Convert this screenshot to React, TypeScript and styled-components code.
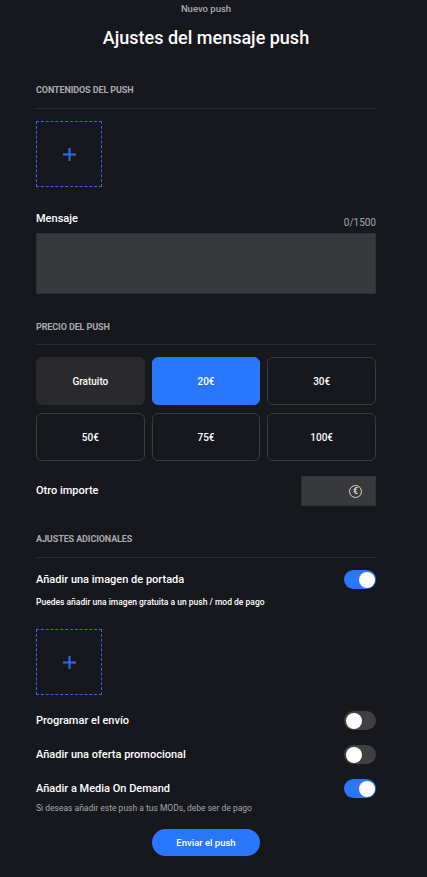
import React from "react";
import styled, { createGlobalStyle } from "styled-components";

const Global = createGlobalStyle`
  html, body { margin: 0; padding: 0; background: #17181d; }
  body { font-family: Roboto, "Noto Sans", Inter, sans-serif; color: #fff; }
  * { box-sizing: border-box; }
`;

const Page = styled.div`
  width: 427px;
  min-height: 877px;
  background: #17181d;
  padding: 0 51px 0 36px;
  display: flex;
  flex-direction: column;
`;

const TopLabel = styled.div`
  margin-top: 3px;
  font-size: 9.5px;
  line-height: 12px;
  font-weight: 500;
  color: #a7a9b0;
  text-align: center;
`;

const Title = styled.h1`
  margin: 11px 0 0;
  font-size: 18px;
  line-height: 24px;
  font-weight: 500;
  text-align: center;
  color: #fff;
`;

const SectionLabel = styled.div<{ $mt: number }>`
  margin-top: ${(p) => p.$mt}px;
  font-size: 9px;
  line-height: 10px;
  font-weight: 700;
  letter-spacing: -0.1px;
  text-transform: uppercase;
  color: #a9abb1;
`;

const Divider = styled.div<{ $mt: number }>`
  margin-top: ${(p) => p.$mt}px;
  height: 1px;
  background: #2b2c31;
`;

const UploadBox = styled.button<{ $mt: number }>`
  margin-top: ${(p) => p.$mt}px;
  width: 66px;
  height: 66px;
  border: 1px dashed #2d6ee6;
  border-radius: 1px;
  background: transparent;
  display: flex;
  align-items: center;
  justify-content: center;
  padding: 0;
  cursor: pointer;
`;

const FieldHead = styled.div`
  margin-top: 25px;
  display: flex;
  justify-content: space-between;
  align-items: flex-start;
`;

const FieldLabel = styled.div`
  font-size: 11px;
  line-height: 14px;
  font-weight: 500;
  color: #fff;
`;

const Counter = styled.div`
  margin-top: 5px;
  font-size: 10px;
  line-height: 12px;
  color: #a3a5ab;
`;

const MessageArea = styled.textarea`
  margin-top: 4px;
  width: 100%;
  height: 61px;
  background: #38393b;
  border: 1px solid #2f3032;
  resize: none;
  outline: none;
  color: #fff;
  font-family: inherit;
  display: block;
`;

const PriceGrid = styled.div`
  margin-top: 12px;
  display: grid;
  grid-template-columns: repeat(3, 1fr);
  column-gap: 7px;
  row-gap: 8px;
`;

const PriceButton = styled.button<{ $variant: "free" | "active" | "outline" }>`
  height: 48px;
  border-radius: 6px;
  font-family: inherit;
  font-size: 10px;
  font-weight: 500;
  color: #fff;
  cursor: pointer;
  background: ${(p) =>
    p.$variant === "active" ? "#2a77fb" : p.$variant === "free" ? "#2a2a2d" : "transparent"};
  border: 1px solid
    ${(p) => (p.$variant === "outline" ? "#3a3b3f" : p.$variant === "active" ? "#2a77fb" : "#2a2a2d")};
`;

const AmountRow = styled.div`
  margin-top: 15px;
  display: flex;
  align-items: center;
  justify-content: space-between;
`;

const RowText = styled.div`
  font-size: 11px;
  line-height: 16px;
  font-weight: 500;
  color: #fff;
`;

const AmountInput = styled.div`
  width: 75px;
  height: 30px;
  background: #38393b;
  border: 1px solid #303133;
  display: flex;
  align-items: center;
  justify-content: flex-end;
  padding-right: 13px;
`;

const EuroBadge = styled.span`
  width: 13px;
  height: 13px;
  border-radius: 50%;
  border: 1.2px solid #d8d8d8;
  color: #d8d8d8;
  font-size: 9px;
  font-weight: 700;
  line-height: 1;
  display: flex;
  align-items: center;
  justify-content: center;
`;

const ToggleRow = styled.div<{ $mt: number }>`
  margin-top: ${(p) => p.$mt}px;
  display: flex;
  align-items: center;
  justify-content: space-between;
  height: 19px;
`;

const Track = styled.span<{ $on: boolean }>`
  width: 32px;
  height: 19px;
  border-radius: 10px;
  background: ${(p) => (p.$on ? "#2a77fb" : "#404042")};
  display: flex;
  align-items: center;
  justify-content: ${(p) => (p.$on ? "flex-end" : "flex-start")};
  padding: 0 1.5px;
`;

const Knob = styled.span`
  width: 16px;
  height: 16px;
  border-radius: 50%;
  background: #fff;
`;

const Hint = styled.div<{ $mt: number; $muted?: boolean }>`
  margin-top: ${(p) => p.$mt}px;
  font-size: 8.5px;
  line-height: 10px;
  font-weight: ${(p) => (p.$muted ? 400 : 500)};
  color: ${(p) => (p.$muted ? "#a3a5ab" : "#fff")};
`;

const Submit = styled.button`
  margin: 16px auto 0;
  width: 108px;
  height: 27px;
  border: none;
  border-radius: 14px;
  background: #2a77fb;
  color: #fff;
  font-family: inherit;
  font-size: 9.5px;
  font-weight: 500;
  cursor: pointer;
`;

const Plus = () => (
  <svg width="13" height="13" viewBox="0 0 13 13">
    <rect x="5.5" y="0" width="2" height="13" fill="#2d6ee6" />
    <rect x="0" y="5.5" width="13" height="2" fill="#2d6ee6" />
  </svg>
);

const Toggle = ({ on }: { on: boolean }) => (
  <Track $on={on}>
    <Knob />
  </Track>
);

const prices: { label: string; v: "free" | "active" | "outline" }[] = [
  { label: "Gratuito", v: "free" },
  { label: "20€", v: "active" },
  { label: "30€", v: "outline" },
  { label: "50€", v: "outline" },
  { label: "75€", v: "outline" },
  { label: "100€", v: "outline" },
];

export default function App() {
  return (
    <>
      <Global />
      <Page>
        <TopLabel>Nuevo push</TopLabel>
        <Title>Ajustes del mensaje push</Title>

        <SectionLabel $mt={35}>Contenidos del push</SectionLabel>
        <Divider $mt={13} />
        <UploadBox $mt={12}>
          <Plus />
        </UploadBox>

        <FieldHead>
          <FieldLabel>Mensaje</FieldLabel>
          <Counter>0/1500</Counter>
        </FieldHead>
        <MessageArea />

        <SectionLabel $mt={28}>Precio del push</SectionLabel>
        <Divider $mt={12} />
        <PriceGrid>
          {prices.map((p) => (
            <PriceButton key={p.label} $variant={p.v}>
              {p.label}
            </PriceButton>
          ))}
        </PriceGrid>

        <AmountRow>
          <RowText>Otro importe</RowText>
          <AmountInput>
            <EuroBadge>€</EuroBadge>
          </AmountInput>
        </AmountRow>

        <SectionLabel $mt={28}>Ajustes adicionales</SectionLabel>
        <Divider $mt={13} />

        <ToggleRow $mt={12}>
          <RowText>Añadir una imagen de portada</RowText>
          <Toggle on />
        </ToggleRow>
        <Hint $mt={8}>Puedes añadir una imagen gratuita a un push / mod de pago</Hint>
        <UploadBox $mt={22}>
          <Plus />
        </UploadBox>

        <ToggleRow $mt={16}>
          <RowText>Programar el envío</RowText>
          <Toggle on={false} />
        </ToggleRow>
        <ToggleRow $mt={15}>
          <RowText>Añadir una oferta promocional</RowText>
          <Toggle on={false} />
        </ToggleRow>
        <ToggleRow $mt={15}>
          <RowText>Añadir a Media On Demand</RowText>
          <Toggle on />
        </ToggleRow>
        <Hint $mt={5} $muted>
          Si deseas añadir este push a tus MODs, debe ser de pago
        </Hint>
        <Submit>Enviar el push</Submit>
      </Page>
    </>
  );
}
